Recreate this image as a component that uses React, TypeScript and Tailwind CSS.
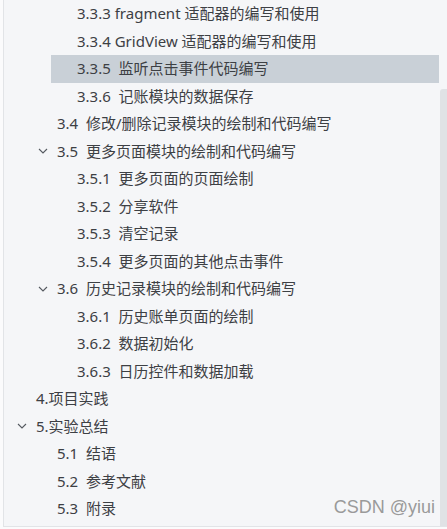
const items: { label: string; level: number; open?: boolean; active?: boolean }[] = [
  { label: "3.3.3 fragment 适配器的编写和使用", level: 3 },
  { label: "3.3.4 GridView 适配器的编写和使用", level: 3 },
  { label: "3.3.5  监听点击事件代码编写", level: 3, active: true },
  { label: "3.3.6  记账模块的数据保存", level: 3 },
  { label: "3.4  修改/删除记录模块的绘制和代码编写", level: 2 },
  { label: "3.5  更多页面模块的绘制和代码编写", level: 2, open: true },
  { label: "3.5.1  更多页面的页面绘制", level: 3 },
  { label: "3.5.2  分享软件", level: 3 },
  { label: "3.5.3  清空记录", level: 3 },
  { label: "3.5.4  更多页面的其他点击事件", level: 3 },
  { label: "3.6  历史记录模块的绘制和代码编写", level: 2, open: true },
  { label: "3.6.1  历史账单页面的绘制", level: 3 },
  { label: "3.6.2  数据初始化", level: 3 },
  { label: "3.6.3  日历控件和数据加载", level: 3 },
  { label: "4.项目实践", level: 1 },
  { label: "5.实验总结", level: 1, open: true },
  { label: "5.1  结语", level: 2 },
  { label: "5.2  参考文献", level: 2 },
  { label: "5.3  附录", level: 2 },
];

const indent: Record<number, string> = {
  1: "pl-[32px]",
  2: "pl-[53px]",
  3: "pl-[73px]",
};

function Chevron() {
  return (
    <svg width="10" height="6" viewBox="0 0 10 6" className="absolute -left-[19px] top-1/2 -translate-y-1/2" fill="none">
      <path d="M1 1l4 4 4-4" stroke="#555a60" strokeWidth="1.1" />
    </svg>
  );
}

function Row({ item }: { item: (typeof items)[0] }) {
  return (
    <div
      className={`flex items-center h-[27.5px] ${indent[item.level]} ${
        item.active ? "bg-[#c9d0d7] ml-[47px] !pl-[26px]" : ""
      }`}
    >
      <span className="relative whitespace-pre text-[15px] leading-none text-[#3d4044]">
        {item.open && <Chevron />}
        {item.label}
      </span>
    </div>
  );
}

export default function App() {
  return (
    <div
      className="w-[447px] h-[529px] bg-[#fbfbfc] pl-[3px] overflow-hidden"
      style={{ fontFamily: '"Noto Sans", "Noto Sans CJK SC", sans-serif' }}
    >
      <div className="relative h-[527px] bg-[#f5f6f8] border-l border-b border-[#e2e4e7]">
        <div className="pr-[8px]">
          {items.map((item) => (
            <Row key={item.label} item={item} />
          ))}
        </div>

        {/* scrollbar */}
        <div className="absolute right-0 top-[89px] bottom-0 w-[7px] rounded-tl-[3px] bg-[#e0e2e5]" />

        {/* watermark */}
        <div
          className="absolute right-[12px] bottom-[5px] text-[18px] text-[#9a9a9a]"
          style={{ fontFamily: '"Liberation Sans", Arial, sans-serif' }}
        >
          CSDN @yiui
        </div>
      </div>
    </div>
  );
}
